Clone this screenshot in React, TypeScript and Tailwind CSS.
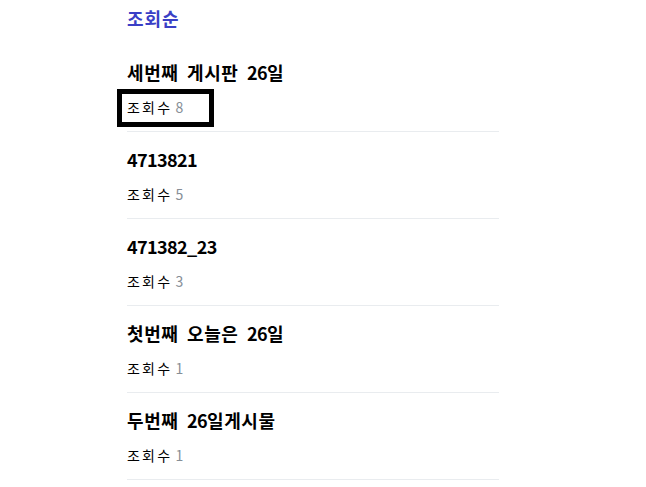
import React from "react";

const items = [
  { title: "세번째 게시판 26일", views: 8 },
  { title: "4713821", views: 5 },
  { title: "471382_23", views: 3 },
  { title: "첫번째 오늘은 26일", views: 1 },
  { title: "두번째 26일게시물", views: 1 },
];

function Split({ text, hangul, other }: { text: string; hangul: string; other: string }) {
  const parts = text.split(/([가-힣]+)/).filter((p) => p.length > 0);
  return (
    <>
      {parts.map((p, i) =>
        /[가-힣]/.test(p) ? (
          <span key={i} className={hangul}>
            {p}
          </span>
        ) : (
          <span key={i} className={other}>
            {p}
          </span>
        )
      )}
    </>
  );
}

export default function App() {
  return (
    <div
      className="min-h-[487px] bg-white text-black"
      style={{ fontFamily: '"Noto Sans CJK KR", "Noto Sans", sans-serif' }}
    >
      <div className="ml-[127px] w-[372px]">
        <h2 className="pt-[6px] pb-[15px] text-[18px] leading-[24px] font-bold text-[#3a3fc6] tracking-[1px]">
          조회순
        </h2>
        <ul>
          {items.map((it, i) => (
            <li key={i} className="pt-[15px] pb-[14px] border-b border-[#e9ecef]">
              <div className="text-[18px] leading-[24px] font-bold [word-spacing:5px]">
                <Split text={it.title} hangul="tracking-[0.6px]" other="tracking-[-0.6px]" />
              </div>
              <div className="mt-[13px] text-[14px] leading-[20px]">
                <span className="relative inline-block">
                  <span className="tracking-[2.2px]">조회수</span>{" "}
                  <span className="text-[#868e96]">{it.views}</span>
                  {i === 0 && (
                    <span className="absolute -left-[10px] -top-[8px] w-[97px] h-[38px] border-[5px] border-black"></span>
                  )}
                </span>
              </div>
            </li>
          ))}
        </ul>
      </div>
    </div>
  );
}
